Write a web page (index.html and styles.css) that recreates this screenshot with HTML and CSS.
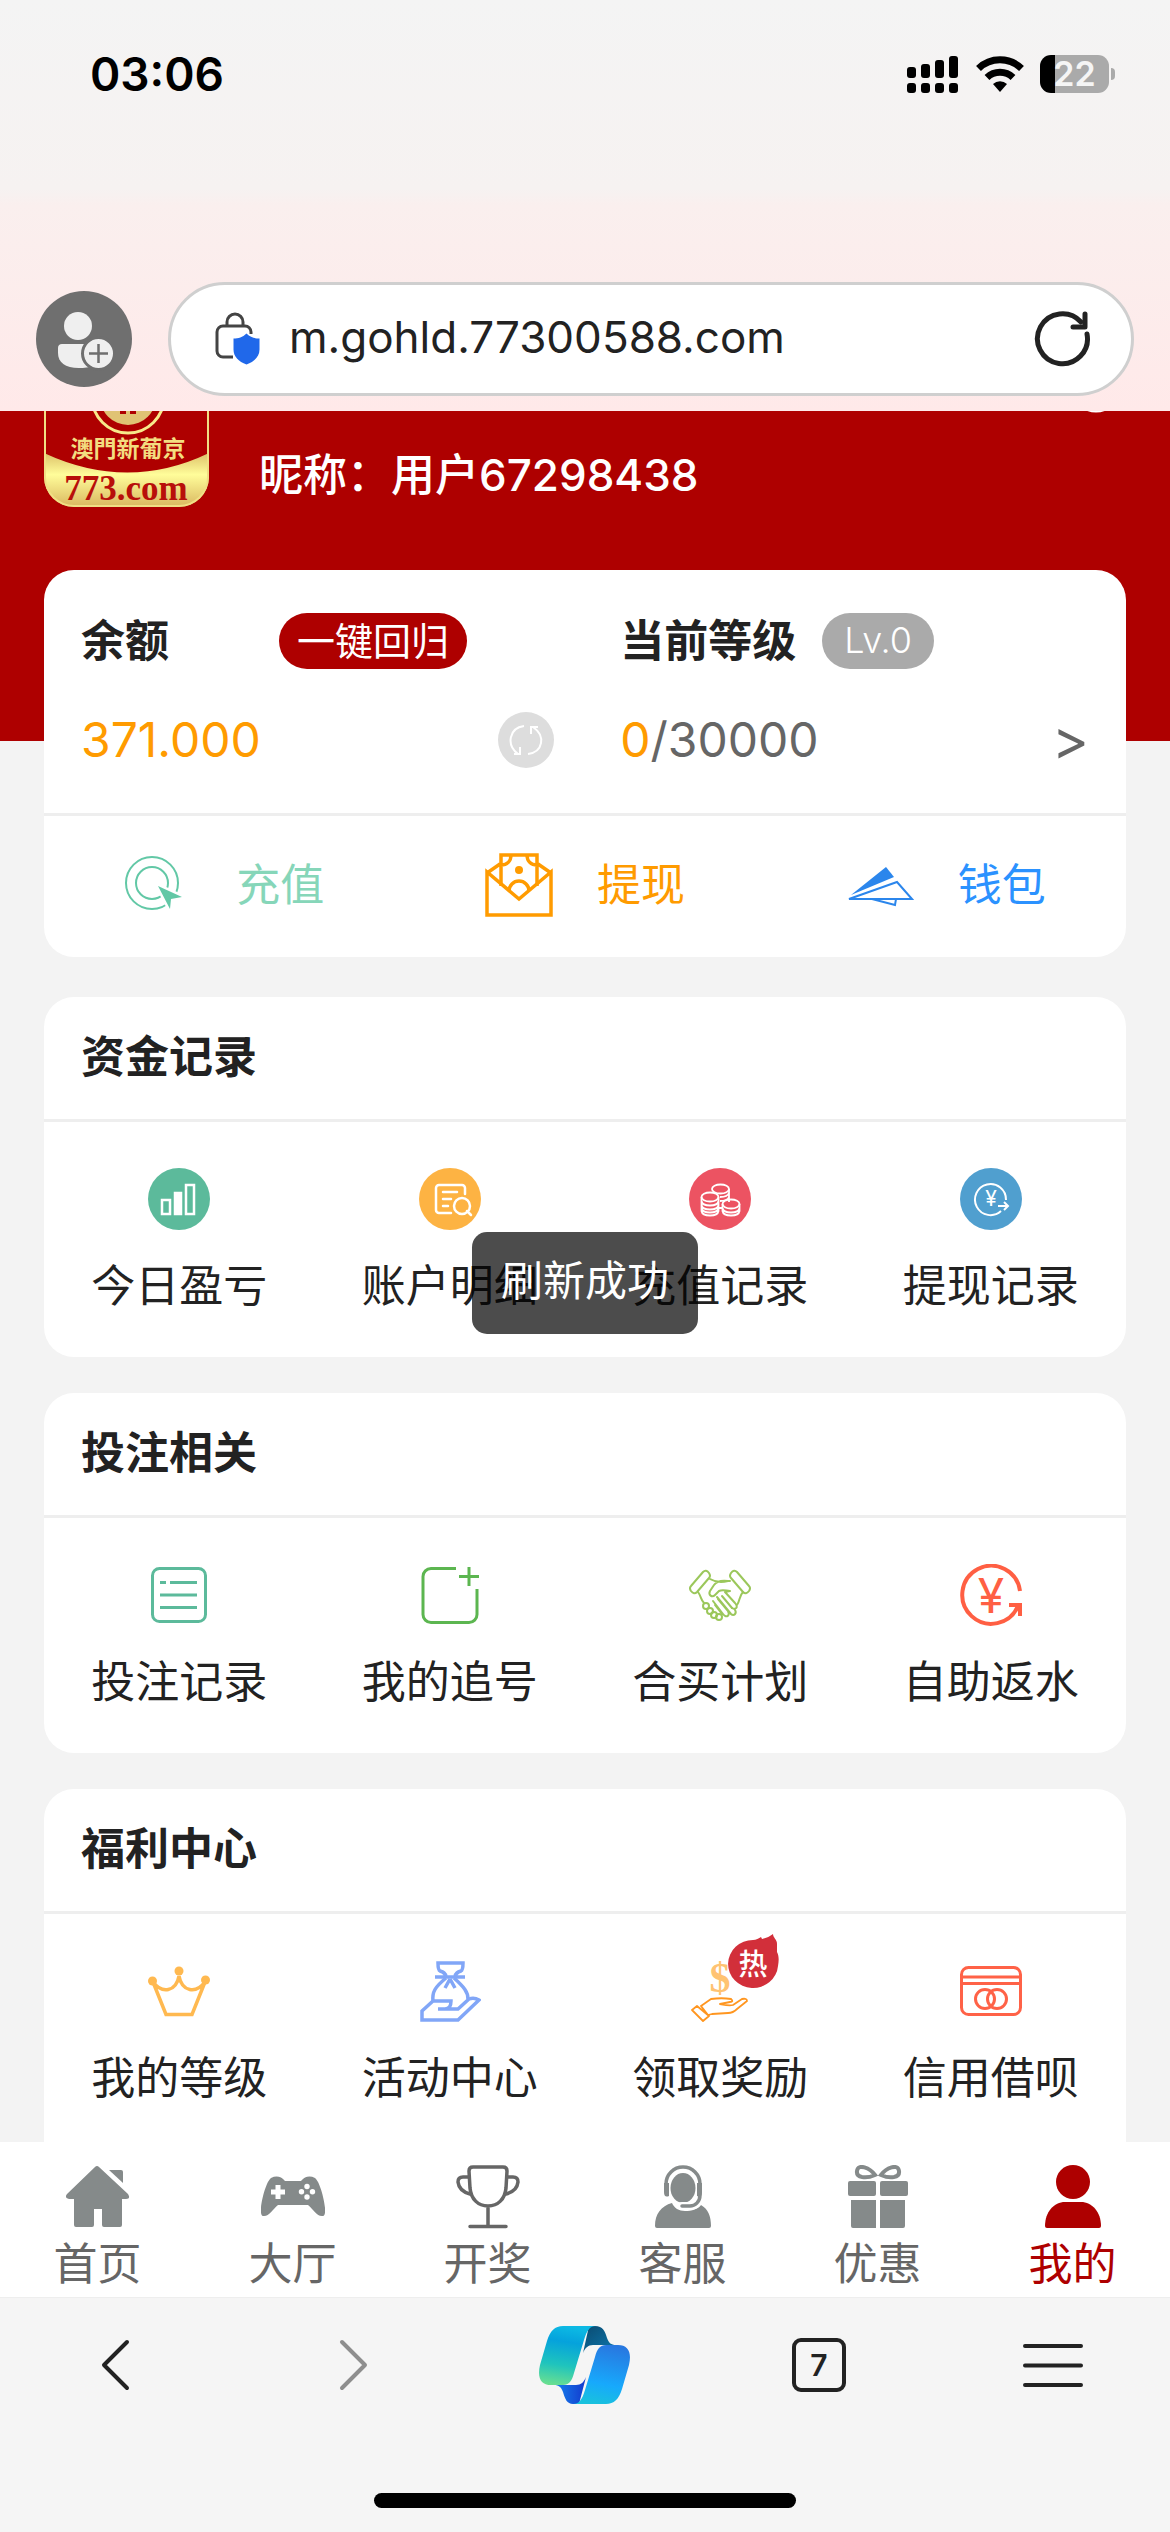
FILE: index.html
```html
<!doctype html>
<html lang="zh-CN">
<head>
<meta charset="utf-8">
<meta name="viewport" content="width=device-width, initial-scale=1">
<title>我的</title>
    <link rel="stylesheet" href="styles.css">
</head>
<body>
<header class="browser-top">
    <div class="status-bar">
        <span class="status-time">03:06</span>
        <div class="status-icons">
            <svg width="53" height="38" viewBox="0 0 53 38">
                <g>
                    <rect x="0" y="12" width="9" height="11" rx="3"/>
                    <rect x="14" y="9" width="9" height="14" rx="3"/>
                    <rect x="28" y="5" width="9" height="18" rx="3"/>
                    <rect x="42" y="1" width="9" height="22" rx="3"/>
                    <rect x="0" y="28" width="9" height="10" rx="3"/>
                    <rect x="14" y="28" width="9" height="10" rx="3"/>
                    <rect x="28" y="28" width="9" height="10" rx="3"/>
                    <rect x="42" y="28" width="9" height="10" rx="3"/>
                </g>
            </svg>
            <svg width="50" height="38" viewBox="0 0 50 38" fill="none" stroke="#000" stroke-width="7">
                <path d="M3.500 13.500A31 31 0 0 1 46.500 13.500"/>
                <path d="M12 22.500A19 19 0 0 1 38 22.500"/>
                <path d="M25 37l-7-8a10.500 10.500 0 0 1 14 0z" fill="#000" stroke="none"/>
            </svg>
            <div class="battery"><span class="battery-num">22</span></div>
        </div>
    </div>
    <div class="address-row">
        <button class="avatar-btn" title="登录">
            <svg width="96" height="96" viewBox="0 0 96 96">
                <circle cx="42" cy="35" r="14" fill="#efefef"/>
                <path d="M26 53h32v22c-5 1.500-10 2-15 2-14 0-21-6-21-15v-5c0-2.500 1.500-4 4-4z" fill="#efefef"/>
                <circle cx="62.500" cy="62.500" r="16" fill="#efefef" stroke="#6f6f6f" stroke-width="3"/>
                <path d="M62.500 53v19M53 62.500h19" stroke="#6f6f6f" stroke-width="2.500"/>
            </svg>
        </button>
        <div class="address-box">
            <svg width="46" height="54" viewBox="0 0 46 54" fill="none">
                <path d="M13 14v-4a8 8 0 0 1 16 0v4M19 45H9a6 6 0 0 1-6-6V20a6 6 0 0 1 6-6h22a6 6 0 0 1 6 6v2" stroke="#444" stroke-width="3"/>
                <path d="M32.500 21.500c4 4 8 5 13 5v11c0 7-5 12-13 15-8-3-13-8-13-15v-11c5 0 9-1 13-5z" fill="#2068ea"/>
            </svg>
            <input class="address-input" type="text" aria-label="网址" value="m.gohld.77300588.com">
            <button class="reload-btn" title="刷新">
                <svg width="58" height="58" viewBox="0 0 58 58" fill="none" stroke="#222" stroke-width="5" stroke-linecap="round" stroke-linejoin="round">
                    <path d="M53 24a25 25 0 1 1-6-12"/>
                    <path d="M51 4v13H39"/>
                </svg>
            </button>
        </div>
    </div>
</header>

<main class="page-main">
    <section class="profile">
        <div class="logo">
            <svg width="165" height="165" viewBox="0 0 165 165">
                <defs>
                    <linearGradient id="gold" x1="0" y1="0" x2="0" y2="1">
                        <stop offset="0" stop-color="#dcc069"/>
                        <stop offset="0.4" stop-color="#fffd9a"/>
                        <stop offset="1" stop-color="#d9b760"/>
                    </linearGradient>
                    <clipPath id="logoClip"><rect width="165" height="165" rx="30"/></clipPath>
                </defs>
                <g clip-path="url(#logoClip)">
                    <rect width="165" height="165" fill="#ae0000"/>
                    <circle cx="84" cy="55" r="36" fill="none" stroke="#f7e98a" stroke-width="3"/>
                    <circle cx="84" cy="55" r="28" fill="#e0c374"/>
                    <path d="M76 52v20h6V52zM86 52v20h6V52z" fill="#ae0000"/>
                    <path d="M0 111Q84 150 165 111V165H0z" fill="url(#gold)"/>
                    <rect x="1" y="1" width="163" height="163" rx="29" fill="none" stroke="#f0df85" stroke-width="2"/>
                </g>
                <text class="logo-name" x="84" y="115" text-anchor="middle">澳門新葡京</text>
                <text class="logo-site" x="82" y="158" text-anchor="middle">773.com</text>
            </svg>
        </div>
        <p class="nickname">昵称：用户67298438</p>
        <button class="set-btn" title="设置">
            <svg width="60" height="72" viewBox="0 0 60 72" fill="none" stroke="#fff" stroke-width="5">
                <circle cx="30" cy="46" r="22"/>
                <circle cx="30" cy="46" r="8"/>
            </svg>
        </button>
    </section>

    <section class="card wallet-card">
        <div class="wallet-info">
            <div class="wallet-col">
                <div class="wallet-row balance-row">
                    <h2 class="card-name">余额</h2>
                    <button class="pill pill-red">一键回归</button>
                </div>
                <div class="wallet-row wallet-between">
                    <span class="money money-orange">371.000</span>
                    <button class="refresh-btn" title="刷新余额">
                        <svg width="56" height="56" viewBox="0 0 56 56" fill="none" stroke="#fff" stroke-width="2">
                            <circle cx="28" cy="28" r="28" fill="#ddd" stroke="none"/>
                            <path d="M26 14C11 16 8 33 20 42M16 42h6v-7"/>
                            <path d="M30 42C45 40 48 24 35 15M40 15h-7v7"/>
                        </svg>
                    </button>
                </div>
            </div>
            <div class="wallet-col">
                <div class="wallet-row level-row">
                    <h2 class="card-name">当前等级</h2>
                    <span class="pill pill-gray">Lv.0</span>
                </div>
                <a class="wallet-row wallet-between" href="#level">
                    <span class="money"><em class="money-orange">0</em>/30000</span>
                    <span class="arrow">&gt;</span>
                </a>
            </div>
        </div>
        <div class="wallet-actions">
            <a class="action-item action-green" href="#recharge">
                <svg width="68" height="64" viewBox="0 -2 68 64" fill="none" stroke="#62c8a6" stroke-width="2">
                    <circle cx="28" cy="28" r="26"/>
                    <circle cx="28" cy="28" r="16"/>
                    <path d="M34 31l24 11-11 2-1 10z" fill="#62c8a6" stroke="#fff" stroke-width="5" paint-order="stroke"/>
                </svg>
                <span>充值</span>
            </a>
            <a class="action-item action-orange" href="#withdraw">
                <svg width="68" height="64" viewBox="0 0 68 64" fill="none" stroke="#ff9b00" stroke-width="3.500">
                    <path d="M2 19v43h64V19L34 46z"/>
                    <path d="M2 20l13-9M66 20l-13-9M16 33V2h36v31M26 2c0 6-4 10-10 10M42 2c0 6 4 10 10 10M24 38a10 10 0 0 1 20 0"/>
                    <circle cx="34" cy="17" r="4" fill="#ff9b00" stroke="none"/>
                </svg>
                <span>提现</span>
            </a>
            <a class="action-item action-blue" href="#wallet">
                <svg width="68" height="64" viewBox="0 -14 68 64" fill="none" stroke="#2b86ec" stroke-width="2">
                    <path d="M40 0l8 10L5 28z" fill="#2b86ec" stroke="none"/>
                    <path d="M51 15l15 17H3zM26 32l23 6 1-6"/>
                </svg>
                <span>钱包</span>
            </a>
        </div>
    </section>

    <section class="card">
        <h2 class="card-title">资金记录</h2>
        <ul class="menu-list">
            <li><a class="menu-item" href="#profit">
                <svg width="62" height="62" viewBox="0 0 62 62" fill="none" stroke="#fff" stroke-width="2.500">
                    <circle cx="31" cy="31" r="31" fill="#5cba9b" stroke="none"/>
                    <rect x="14" y="32" width="8" height="14"/>
                    <rect x="27" y="25" width="6" height="21" fill="#fff"/>
                    <rect x="38" y="17" width="8" height="29"/>
                </svg>
                <span>今日盈亏</span>
            </a></li>
            <li><a class="menu-item" href="#detail">
                <svg width="62" height="62" viewBox="0 0 62 62" fill="none" stroke="#fff" stroke-width="2.500" stroke-linecap="round">
                    <circle cx="31" cy="31" r="31" fill="#fdb343" stroke="none"/>
                    <path d="M46 26v-6a3 3 0 0 0-3-3H20a3 3 0 0 0-3 3v22a3 3 0 0 0 3 3h12M24 24h14M24 31h8M24 38h5"/>
                    <circle cx="43" cy="38" r="8"/>
                    <path d="M48 43l4 4"/>
                </svg>
                <span>账户明细</span>
            </a></li>
            <li><a class="menu-item" href="#recharge-log">
                <svg width="62" height="62" viewBox="0 0 62 62" fill="none" stroke="#fff" stroke-width="1.800">
                    <circle cx="31" cy="31" r="31" fill="#ec5362" stroke="none"/>
                    <ellipse cx="31.500" cy="21" rx="8.500" ry="4.500"/>
                    <path d="M40 21v13M40 25c-1 3-5 4-9 4M40 29c-1 3-5 4-9 4"/>
                    <ellipse cx="21" cy="29" rx="8.500" ry="4.500"/>
                    <path d="M12.500 29v14c1 6 16 6 17 0V29M12.500 33c1 6 16 6 17 0M12.500 37c1 6 16 6 17 0M12.500 40c1 6 16 6 17 0"/>
                    <ellipse cx="42" cy="36" rx="8.500" ry="4.500"/>
                    <path d="M33.500 36v7c1 6 16 6 17 0v-7M33.500 40c1 6 16 6 17 0M29.500 40h4"/>
                </svg>
                <span>充值记录</span>
            </a></li>
            <li><a class="menu-item" href="#withdraw-log">
                <svg width="62" height="62" viewBox="0 0 62 62" fill="none" stroke="#fff" stroke-width="2">
                    <circle cx="31" cy="31" r="31" fill="#509fcf" stroke="none"/>
                    <path d="M46 32A15.500 15.500 0 1 0 41 43M38 38h10M44 34l4 4-4 4"/>
                    <text class="yen-small" x="31" y="38" text-anchor="middle">¥</text>
                </svg>
                <span>提现记录</span>
            </a></li>
        </ul>
    </section>

    <section class="card">
        <h2 class="card-title">投注相关</h2>
        <ul class="menu-list">
            <li><a class="menu-item" href="#bets">
                <svg width="62" height="62" viewBox="0 0 62 62" fill="none" stroke="#5cba9b" stroke-width="3">
                    <rect x="4.500" y="4.500" width="53" height="53" rx="7"/>
                    <path d="M12 18.500h6M22 18.500h27M12 31h37M12 43.500h37"/>
                </svg>
                <span>投注记录</span>
            </a></li>
            <li><a class="menu-item" href="#chase">
                <svg width="62" height="62" viewBox="0 0 62 62" fill="none" stroke="#5cb650" stroke-width="3">
                    <path d="M37 4.500H12a8 8 0 0 0-8 8v38a8 8 0 0 0 8 8h38a8 8 0 0 0 8-8V25M40 12.500h20M50 3v19"/>
                </svg>
                <span>我的追号</span>
            </a></li>
            <li><a class="menu-item" href="#plan">
                <svg width="62" height="62" viewBox="0 0 62 62" fill="none" stroke="#9bc75b" stroke-width="2" stroke-linejoin="round" stroke-linecap="round">
                    <path d="M14 8q3-3 6 1 2 3 0 5L8 28q-3 3-6-1-2-3 0-5z"/>
                    <path d="M48 8q-3-3-6 1-2 3 0 5l12 14q3 3 6-1 2-3 0-5z"/>
                    <path d="M21 15c5 3 10 4 18 2h2M9 28c3 4 3 8 6 11M54 28c-4 4-3 9-6 13M39 17c-8-1-12 1-14 4l-4 6c-2 4 2 7 5 4l4-4c4-2 7 0 11 0l-5 1 10 11c4 5 0 7-3 5"/>
                    <path d="M28 33l14 17c3 3 6-1 4-4M33 32l10 12M24 37l10 13c4 5 7 1 5-3L29 35M26 41l7 9"/>
                    <circle cx="17" cy="42" r="3"/>
                    <circle cx="21" cy="47" r="3"/>
                    <circle cx="25" cy="51" r="3"/>
                    <circle cx="30" cy="53" r="3"/>
                </svg>
                <span>合买计划</span>
            </a></li>
            <li><a class="menu-item" href="#rebate">
                <svg width="62" height="62" viewBox="0 0 62 62" fill="none" stroke="#ff5f43" stroke-width="4">
                    <path d="M60 27A29 29 0 1 0 58 42"/>
                    <path d="M49 41h11v11"/>
                    <text class="yen-big" x="31" y="49" text-anchor="middle">¥</text>
                </svg>
                <span>自助返水</span>
            </a></li>
        </ul>
    </section>

    <section class="card welfare-card">
        <h2 class="card-title">福利中心</h2>
        <ul class="menu-list">
            <li><a class="menu-item" href="#my-level">
                <svg width="62" height="62" viewBox="0 0 62 62" fill="none" stroke="#ffb950" stroke-width="3.500">
                    <path d="M5 22l13 32.500h26L57 22C48 34 34 32 31 16 28 32 14 34 5 22z"/>
                    <g fill="#ffb950" stroke="none">
                        <circle cx="4.500" cy="21" r="4.500"/>
                        <circle cx="31" cy="11" r="4.500"/>
                        <circle cx="57.500" cy="20" r="4.500"/>
                    </g>
                </svg>
                <span>我的等级</span>
            </a></li>
            <li><a class="menu-item" href="#activity">
                <svg width="62" height="62" viewBox="0 0 62 62" fill="none" stroke="#81a6f7" stroke-width="3.500">
                    <path d="M27 17c0-4-3-5-6-6-2-1-2-4-2-8h25c0 4 0 7-2 8-3 1-6 2-6 6M16 17h30"/>
                    <path d="M27 18C16 27 13 32 14 41M35 18c10 9 14 14 14 21M31 19l-5 9M31 19l5 9"/>
                    <path d="M3 60V51l11-10h18c0 5-2 8-6 8h-7 20l11-10q5-2 10 1L39 60z"/>
                </svg>
                <span>活动中心</span>
            </a></li>
            <li><a class="menu-item" href="#reward">
                <svg width="62" height="62" viewBox="0 0 62 62" fill="none" stroke="#ff9620" stroke-width="1.800" stroke-linejoin="round">
                    <text class="dollar" x="31" y="32" text-anchor="middle">$</text>
                    <path d="M3 50l5-4 12 10-6 5zM12 46l10-7c7-1 14-1 20 0q3 3-1 3l-10 2c5 1 9 2 13 1l9-6q5-1 5 2L48 49c-3 3-6 4-9 4l-16 1-4 1z"/>
                </svg>
                <span>领取奖励</span>
                <svg class="hot-badge" width="52" height="56" viewBox="0 0 52 56">
                    <path d="M26 6c3 0 6-2 8-3l1 2c5-1 8-3 11-5 0 4 4 5 4 10v8c2 4 2 8 1 14A25 24 0 1 1 26 6z" fill="#d22f3a"/>
                    <text x="26" y="41" text-anchor="middle">热</text>
                </svg>
            </a></li>
            <li><a class="menu-item" href="#credit">
                <svg width="62" height="62" viewBox="0 0 62 62" fill="none" stroke="#ff6247" stroke-width="3">
                    <rect x="1.500" y="7.500" width="59" height="47" rx="7"/>
                    <path d="M2 17h58M2 23.500h58"/>
                    <circle cx="25" cy="39" r="9.500"/>
                    <circle cx="37" cy="39" r="9.500"/>
                </svg>
                <span>信用借呗</span>
            </a></li>
        </ul>
    </section>

    <div class="toast" role="status">刷新成功</div>
</main>

<nav class="tab-bar">
    <a class="tab-item" href="#home">
        <svg width="64" height="64" viewBox="0 0 64 64" fill="#858a8a">
            <path d="M29 2q2-2 4 0l29 27q3 5-2 5h-4v26q0 2-2 2H38q-2 0-2-2V44h-8v16q0 2-2 2H10q-2 0-2-2V34H3q-5-1-2-5z"/>
            <path d="M43 5h12q2 0 2 2v11z"/>
        </svg>
        <span>首页</span>
    </a>
    <a class="tab-item" href="#hall">
        <svg width="64" height="64" viewBox="0 0 64 64" fill="#858a8a">
            <path d="M10 13q8-4 14 3h16q6-7 14-3c6 4 14 38 8 38-6 1-9-6-15-11H17C11 45 8 52 2 51c-6 0 2-34 8-38z"/>
            <path d="M10 27h14M17 20v14" stroke="#fff" stroke-width="5"/>
            <g fill="#fff">
                <circle cx="46" cy="21.500" r="2.700"/>
                <circle cx="46" cy="32" r="2.700"/>
                <circle cx="40.500" cy="26.700" r="2.700"/>
                <circle cx="51.500" cy="26.700" r="2.700"/>
            </g>
        </svg>
        <span>大厅</span>
    </a>
    <a class="tab-item" href="#lottery">
        <svg width="64" height="64" viewBox="0 0 64 64" fill="none" stroke="#666" stroke-width="3.500" stroke-linecap="round">
            <path d="M17 2h30q4 0 4 4l-1 17c-1 11-8 18-18 18s-17-7-18-18L13 6q0-4 4-4zM32 41v20M14 61.500h36"/>
            <path d="M13 12H7q-5 0-5 5 1 9 12 12M51 12h6q5 0 5 5-1 9-12 12"/>
        </svg>
        <span>开奖</span>
    </a>
    <a class="tab-item" href="#service">
        <svg width="64" height="64" viewBox="0 0 64 64" fill="#858a8a">
            <path d="M4 61c0-12 6-20 17-23 2 5 7 8 13 8 7 0 13-2 16-6 7 4 10 11 10 21q0 2-2 2H6q-2 0-2-2z"/>
            <ellipse cx="32" cy="23" rx="12.500" ry="15" stroke="#fff" stroke-width="3" paint-order="stroke"/>
            <path d="M49 30c0 7-5 11-10 11h-8" fill="none" stroke="#fff" stroke-width="8" stroke-linecap="round"/>
            <path d="M15 19a17 17 0 0 1 34 0v11c0 7-5 11-10 11h-8" fill="none" stroke="#858a8a" stroke-width="3.500" stroke-linecap="round"/>
            <path d="M13 18h5v13q-5 2-5-4zM51 18h-5v13q5 2 5-4z"/>
        </svg>
        <span>客服</span>
    </a>
    <a class="tab-item" href="#promo">
        <svg width="64" height="64" viewBox="0 0 64 64" fill="#858a8a">
            <rect x="2" y="16" width="28" height="15" rx="2"/>
            <rect x="34" y="16" width="28" height="15" rx="2"/>
            <path d="M5 35h25v28H7q-2 0-2-2zM34 35h25v26q0 2-2 2H34z"/>
            <path d="M29 10C24 3 12-2 11 6c-1 7 9 8 18 4zM35 10C40 3 52-2 53 6c1 7-9 8-18 4z" fill="none" stroke="#858a8a" stroke-width="4"/>
        </svg>
        <span>优惠</span>
    </a>
    <a class="tab-item tab-active" href="#mine">
        <svg width="64" height="64" viewBox="0 0 64 64" fill="#ae0000">
            <circle cx="32" cy="17" r="17"/>
            <path d="M4 61c0-14 9-24 20-24h16c11 0 20 10 20 24q0 2-2 2H6q-2 0-2-2z"/>
        </svg>
        <span>我的</span>
    </a>
</nav>

<footer class="browser-bottom">
    <div class="tool-bar">
        <button class="tool-btn" title="后退">
            <svg width="80" height="80" viewBox="0 0 80 80" fill="none" stroke="#222" stroke-width="4" stroke-linecap="round" stroke-linejoin="round"><path d="M50 17L27 40l23 23"/></svg>
        </button>
        <button class="tool-btn" title="前进">
            <svg width="80" height="80" viewBox="0 0 80 80" fill="none" stroke="#8e8e8e" stroke-width="4" stroke-linecap="round" stroke-linejoin="round"><path d="M31 17l23 23-23 23"/></svg>
        </button>
        <button class="tool-btn" title="Copilot">
            <svg width="92" height="80" viewBox="0 -1 92 80">
                <defs>
                    <linearGradient id="cpLeft" x1="0.400" y1="0" x2="0.250" y2="1">
                        <stop offset="0" stop-color="#0cb9e4"/>
                        <stop offset="0.250" stop-color="#05a2dc"/>
                        <stop offset="0.650" stop-color="#1fc4bd"/>
                        <stop offset="1" stop-color="#6adf90"/>
                    </linearGradient>
                    <linearGradient id="cpRight" x1="0.600" y1="0" x2="0.400" y2="1">
                        <stop offset="0" stop-color="#2878e0"/>
                        <stop offset="0.650" stop-color="#17a9fc"/>
                        <stop offset="1" stop-color="#19c1dd"/>
                    </linearGradient>
                    <linearGradient id="cpTop" x1="0" y1="0" x2="1" y2="1">
                        <stop offset="0" stop-color="#0b4a70"/>
                        <stop offset="1" stop-color="#0c78ae"/>
                    </linearGradient>
                    <linearGradient id="cpBottom" x1="0" y1="0" x2="1" y2="0">
                        <stop offset="0" stop-color="#1683ee"/>
                        <stop offset="1" stop-color="#1239cd"/>
                    </linearGradient>
                </defs>
                <path d="M50 0h6c8 0 10 5 12 12 2 5 4 7 9 7H54c-5 0-8 3-10 8z" fill="url(#cpTop)"/>
                <path d="M40 78h-6c-6 0-8-5-10-12-2-5-4-7-9-7h22c5 0 8-3 10-8z" fill="url(#cpBottom)"/>
                <path d="M24 0h33c-6 0-9 4-12 14L35 47c-2 8-5 12-11 12H12C2 59-2 52 1 39L8 15C11 5 16 0 24 0z" fill="url(#cpLeft)"/>
                <path d="M67 78H34c6 0 9-4 12-14l10-33c2-8 5-12 11-12h12c10 0 14 7 11 20l-7 24c-3 10-8 15-16 15z" fill="url(#cpRight)"/>
            </svg>
        </button>
        <button class="tool-btn" title="标签页"><span class="tab-count">7</span></button>
        <button class="tool-btn" title="菜单">
            <svg width="80" height="80" viewBox="0 0 80 80" stroke="#222" stroke-width="4" stroke-linecap="round"><path d="M12 21h56M12 40.500h56M12 60h56"/></svg>
        </button>
    </div>
    <div class="home-line"></div>
</footer>
</body>
</html>
```

FILE: styles.css
```css
html {
    height:100%;
}
body,h2,p,ul,li {
    margin:0;
    padding:0
}
*{box-sizing: border-box;}
body {
    display: flex;
    flex-flow: column;
    height:100%;
    font: 44px/60px Inter,"Noto Sans CJK SC",sans-serif;
    color:#222;
    background:#f3f3f3;
}
ul,li{list-style: none;}
a{color:inherit;text-decoration: none;}
em{font-style: normal;}
svg{display: block;flex: none;}
button{border:0 none;padding:0;margin:0;background: none;font: inherit;color:inherit;cursor: pointer;}

/* browser top */
.browser-top{flex: none;background: linear-gradient(#f4f4f4 0,#f6f2f1 46%,#faefee 50%,#ffe9e9 100%);}
.status-bar{display: flex;justify-content: space-between;align-items: center;height:148px;padding: 0 55px 0 90px;}
.status-time{font-size: 46px;font-weight: 600;color:#000;}
.status-icons{display: flex;align-items: center;gap: 15px;}
.battery{position: relative;width:69px;height:38px;margin-right: 6px;border-radius: 11px;text-align: center;background: linear-gradient(90deg,#000 15px,#aaa 15px);}
.battery:after{content:"";position: absolute;top:13px;right:-6px;width:4px;height:12px;border-radius: 0 4px 4px 0;background: #aaa;}
.battery-num{display: block;font-size: 34px;line-height: 38px;font-weight: 600;color:#f5f5f5;}
.address-row{display: flex;align-items: center;gap: 36px;padding: 134px 36px 15px;}
.avatar-btn{width:96px;height:96px;border-radius: 50%;background: #6f6f6f;}
.address-box{flex: 1;display: flex;align-items: center;gap: 29px;height:114px;padding: 0 39px 0 43px;border:3px solid #cfcfcf;border-radius: 57px;background: #fff;}
.address-input{flex: 1;min-width: 0;padding:0 0 4px;border:0 none;outline: none;font: inherit;color:#222;background: none;}

/* page */
.page-main{position: relative;flex: 1;min-height: 0;overflow: hidden;}
.profile{display: flex;align-items: flex-end;gap: 50px;margin-top: -100px;padding: 31px 44px 234px;background: #ae0000;color:#fff;}
.logo-name{font: 700 23px "Noto Sans CJK TC",sans-serif;fill:#f3dd80;}
.logo-site{font: 700 35px "Liberation Serif",serif;fill:#b80f0a;}
.nickname{flex: 1;margin-bottom: 2px;font-weight: 500;}
.set-btn{align-self: flex-start;}
.card{margin: 0 44px 36px;border-radius: 30px;background: #fff;}
.card-name,.card-title{font-size: 44px;font-weight: 600;}
.card-title{height:125px;line-height: 120px;padding: 0 37px;border-bottom: 3px solid #eee;}

.wallet-card{margin-top: -171px;margin-bottom: 40px;}
.wallet-info{display: grid;grid-template-columns: 107fr 93fr;padding: 43px 37px 45px;border-bottom: 3px solid #eee;}
.wallet-row{display: flex;align-items: center;height:56px;}
.wallet-row + .wallet-row{margin-top: 43px;}
.wallet-between{justify-content: space-between;}
.wallet-col:first-child{padding-right: 66px;}
.balance-row{gap: 110px;}
.level-row{gap: 26px;}
.pill{height:56px;line-height: 54px;border-radius: 28px;color:#fff;text-align: center;white-space: nowrap;}
.pill-red{padding: 0 18px;font-size: 38px;background: #ae0000;}
.pill-gray{padding: 0 22px;font-size: 36px;font-weight: 300;background: #aaa;}
.money{font-size: 48px;color:#666;}
.money-orange{color:#ff9b00;}
.arrow{font-size: 56px;color:#666;}
.wallet-actions{display: grid;grid-template-columns: repeat(3,1fr);height:141px;padding-bottom: 4px;}
.action-item{display: flex;align-items: center;justify-content: center;gap: 44px;}
.action-green{color:#86d6b9;}
.action-orange{color:#ff9b00;}
.action-blue{color:#2b92ff;}

.menu-list{display: grid;grid-template-columns: repeat(4,1fr);}
.menu-item{position: relative;display: flex;flex-flow: column;align-items: center;gap: 26px;padding: 46px 0 41px;}
.welfare-card{padding-bottom: 240px;}
.hot-badge{position: absolute;top:20px;left:50%;margin-left: 7px;}
.hot-badge text{font: 500 29px "Noto Sans CJK SC",sans-serif;fill:#fff;}
.yen-small,.yen-big{stroke: none;font-family: Inter,sans-serif;}
.yen-small{font-size: 21px;fill:#fff;}
.yen-big{font-size: 48px;fill:#ff5f43;}
.dollar{font: 700 42px "Liberation Serif",serif;fill:#ffc372;stroke: none;}
.toast{position: absolute;top:821px;left:50%;transform: translateX(-50%);padding: 0 29px;height:102px;line-height: 98px;border-radius: 15px;font-size: 42px;white-space: nowrap;color:#fff;background: rgba(0,0,0,0.7);}

/* tabs */
.tab-bar{flex: none;display: grid;grid-template-columns: repeat(6,1fr);border-bottom: 1px solid #eee;background: #fff;}
.tab-item{display: flex;flex-flow: column;align-items: center;gap: 5px;padding: 23px 0 3px;color:#666;}
.tab-active{color:#ae0000;}

/* browser bottom */
.browser-bottom{flex: none;padding-bottom: 24px;background: #f5f5f5;}
.tool-bar{display: grid;grid-template-columns: repeat(5,1fr);padding-top: 27px;}
.tool-btn{display: flex;align-items: center;justify-content: center;height:80px;}
.tab-count{width:54px;height:54px;border:4px solid #222;border-radius: 9px;font-size: 30px;line-height: 46px;font-weight: 600;text-align: center;}
.home-line{width:36%;height:15px;margin: 88px auto 0;border-radius: 8px;background: #000;}
```
